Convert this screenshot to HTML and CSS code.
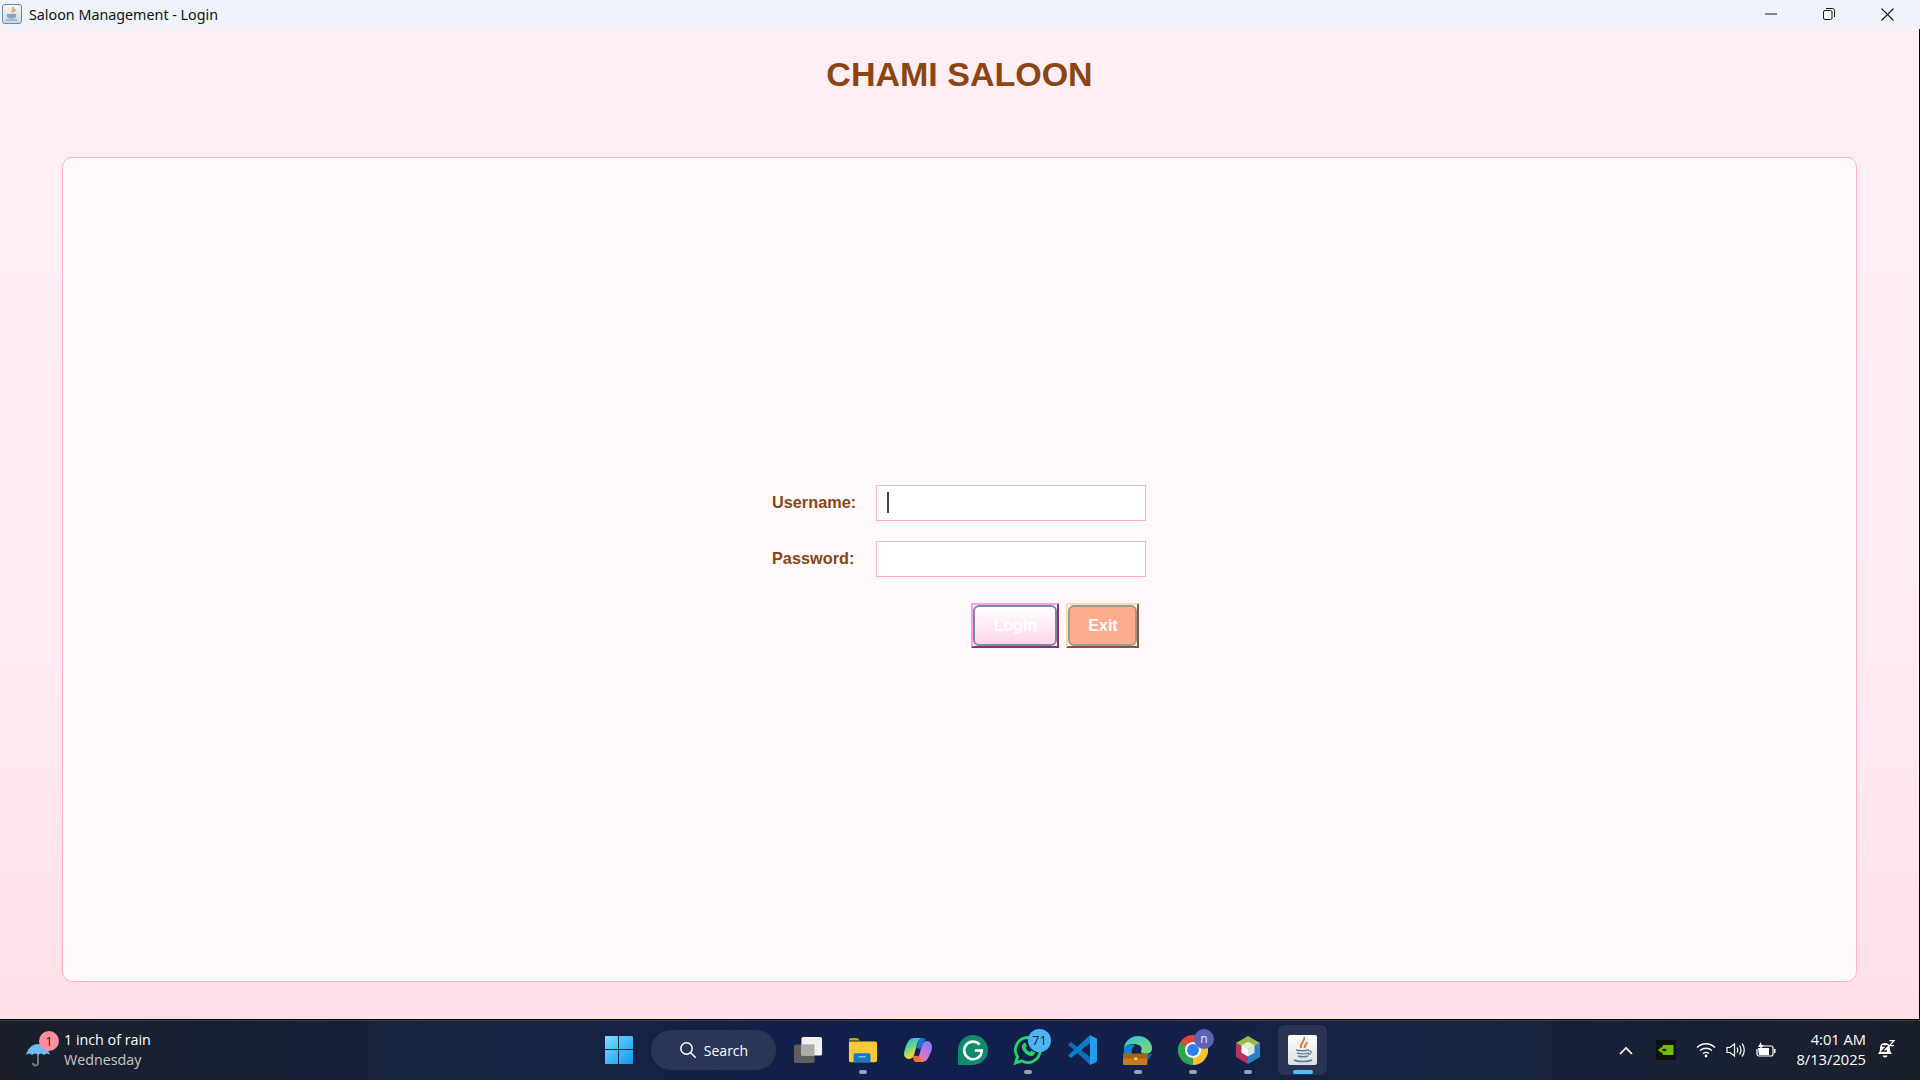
FILE: index.html
```html
<!DOCTYPE html>
<html lang="en">
<head>
<meta charset="utf-8">
<title>Saloon Management - Login</title>
<link rel="stylesheet" href="styles.css">
</head>
<body>
<header class="titlebar">
  <svg class="app-icon" width="20" height="20" viewBox="0 0 20 20">
    <defs><linearGradient id="appbg" x1="0" y1="0" x2="0" y2="1"><stop offset="0" stop-color="#f4f7fa"/><stop offset="1" stop-color="#c9d6e2"/></linearGradient></defs>
    <rect x="0.5" y="0.5" width="19" height="19" rx="2.5" fill="url(#appbg)" stroke="#6c8aa3"/>
    <path d="M11 3c1 2-2 3-1 5M13 5c0 2-2 2-1.500 3.500" fill="none" stroke="#e8883a" stroke-width="1.300"/>
    <path d="M5 10h9v2.500a3 3 0 0 1-3 2H8a3 3 0 0 1-3-2z" fill="#8aa3b8"/>
    <path d="M4 16h11" stroke="#8aa3b8" stroke-width="1.200"/>
  </svg>
  <span class="title-text">Saloon Management - Login</span>
  <div class="win-controls">
    <svg width="12" height="12" viewBox="0 0 12 12"><path d="M0 6h12" stroke="#1a1a1a" stroke-width="1"/></svg>
    <svg width="12" height="12" viewBox="0 0 12 12"><rect x="0.500" y="2.500" width="8.500" height="9" rx="1.500" fill="none" stroke="#1a1a1a"/><path d="M3 .500h6.500a2 2 0 0 1 2 2V9" fill="none" stroke="#1a1a1a"/></svg>
    <svg width="13" height="13" viewBox="0 0 13 13"><path d="M.500.500l12 12M12.500.500l-12 12" stroke="#1a1a1a" stroke-width="1.100"/></svg>
  </div>
</header>

<main class="app">
  <h1 class="brand">CHAMI SALOON</h1>
  <section class="panel">
    <form class="login">
      <label class="field-label">Username:</label>
      <div class="input focused"><i class="caret"></i></div>
      <label class="field-label">Password:</label>
      <div class="input"></div>
      <div class="actions">
        <button type="button" class="btn btn-login"><span class="btn-face">Login</span></button>
        <button type="button" class="btn btn-exit"><span class="btn-face">Exit</span></button>
      </div>
    </form>
  </section>
</main>

<footer class="taskbar">
  <div class="weather">
    <div class="weather-icon">
      <svg width="28" height="30" viewBox="0 0 28 30">
        <path d="M1 17C3 9 9 6 13 6s10 3 12 11c-2-2-4-2-6 0-2-2-4-2-6 0-2-2-4-2-6 0-2-2-4-2-6 0z" fill="#6cbcf7"/>
        <path d="M13 16v9a2.500 2.500 0 0 1-5 0" fill="none" stroke="#7d7d7d" stroke-width="1.800"/>
      </svg>
      <span class="weather-badge">1</span>
    </div>
    <div class="weather-text">
      <div class="weather-main">1 inch of rain</div>
      <div class="weather-sub">Wednesday</div>
    </div>
  </div>

  <div class="dock">
    <svg class="dock-icon" width="30" height="30" viewBox="0 0 30 30">
      <defs><linearGradient id="winblue" x1="0" y1="0" x2="1" y2="1"><stop offset="0" stop-color="#7ddcff"/><stop offset="1" stop-color="#0a9bf0"/></linearGradient></defs>
      <path d="M1 2a1 1 0 0 1 1-1h12v13H1zM15 1h12a2 2 0 0 1 2 1v12H15zM1 15h13v14H2a1 1 0 0 1-1-1zM15 15h14v13a1 1 0 0 1-1 1H15z" fill="url(#winblue)"/>
    </svg>
    <div class="search-pill">
      <svg width="18" height="18" viewBox="0 0 18 18"><circle cx="7.500" cy="7.500" r="5.700" fill="none" stroke="#fff" stroke-width="1.500"/><path d="M11.700 11.700l5 5" stroke="#fff" stroke-width="1.500"/></svg>
      <span>Search</span>
    </div>
    <div class="dock-item task-view">
      <svg width="30" height="28" viewBox="0 0 32 30" preserveAspectRatio="none">
        <rect x="1" y="9" width="22" height="20" rx="2" fill="#5f5f5f"/>
        <rect x="9" y="1" width="22" height="20" rx="2" fill="#f0f0f0"/>
        <rect x="9" y="9" width="14" height="12" fill="#acacac"/>
      </svg>
    </div>
    <div class="dock-item running">
      <svg width="30" height="27" viewBox="0 0 32 30" preserveAspectRatio="none">
        <path d="M1 3a2 2 0 0 1 2-2h7l3 3h-12z" fill="#d49b10"/>
        <path d="M1 5h28a2 2 0 0 1 2 2v19a2 2 0 0 1-2 2H3a2 2 0 0 1-2-2z" fill="#fcc934"/>
        <path d="M6 20a2 2 0 0 1 2-2h14a2 2 0 0 1 2 2v8H6z" fill="#1179c9"/>
        <path d="M11 22h8" stroke="#9fd6ff" stroke-width="1.200"/>
      </svg>
    </div>
    <div class="dock-item">
      <svg width="28" height="26" viewBox="0 0 28 26">
        <defs>
          <linearGradient id="cop1" x1="0.1" y1="0" x2="0.6" y2="1"><stop offset="0" stop-color="#2fa8f5"/><stop offset=".45" stop-color="#62d98a"/><stop offset=".8" stop-color="#f5d33c"/><stop offset="1" stop-color="#f59a3c"/></linearGradient>
          <linearGradient id="cop2" x1="0.8" y1="0" x2="0.3" y2="1"><stop offset="0" stop-color="#7a7cf0"/><stop offset=".5" stop-color="#c873e6"/><stop offset="1" stop-color="#f77a8a"/></linearGradient>
        </defs>
        <path d="M10 1h8c-3 1-4 3-5 6l-3 11c-1 3-3 4-5 4H4c-3-1-4-3-4-5 0-2 1-5 2-8C4 4 6 1 10 1z" fill="url(#cop1)"/>
        <path d="M18 25h-8c3-1 4-3 5-6l3-11c1-3 3-4 5-4 3 0 5 3 5 6s-1 5-2 7c-2 5-4 8-8 8z" fill="url(#cop2)"/>
        <path d="M9 19c4-1 8 0 9 6h-5c-3 0-4-3-4-6z" fill="#f2703f"/>
        <path d="M18 1c-3 1-4 3-5 6l-1 4 5 1 2-5c.5-2 1-3 3-4-1-1.500-2-2-4-2z" fill="#1f6fd6"/>
      </svg>
    </div>
    <div class="dock-item">
      <svg width="30" height="30" viewBox="0 0 30 30">
        <path d="M15 0a15 15 0 0 1 0 30H0V15A15 15 0 0 1 15 0z" fill="#0f8a6c"/>
        <path d="M21.500 9.500A8.800 8.800 0 1 0 23.800 15.500h-7" fill="none" stroke="#fff" stroke-width="2.600"/>
      </svg>
    </div>
    <div class="dock-item running">
      <svg width="32" height="32" viewBox="0 0 32 32">
        <path d="M16 3.500a12.500 12.500 0 0 0-10.500 19.300L3.500 29l6.300-2A12.500 12.500 0 1 0 16 3.500z" fill="none" stroke="#25d366" stroke-width="2.800"/>
        <path d="M11 10c-2 2-1 6 2 9s7 4 9 2l1-2.500-3.500-2-1.800 1.500c-2-1-3.200-2.200-4.200-4.200l1.500-1.800-2-3.500z" fill="#25d366"/>
      </svg>
      <span class="count-badge">71</span>
    </div>
    <div class="dock-item">
      <svg width="30" height="32" viewBox="0 0 30 32">
        <path d="M3 8L0 10.500 17 26l5 5V23z" fill="#0e6fb5"/>
        <path d="M22 1L0 21.500 3 24 22 9z" fill="#0a7fc8"/>
        <path d="M22 1l7 3.500v23L22 31z" fill="#1e9fe8"/>
      </svg>
    </div>
    <div class="dock-item running">
      <svg width="30" height="30" viewBox="0 0 32 32">
        <defs><linearGradient id="edgeg" x1="0" y1="0" x2="1" y2="1"><stop offset="0" stop-color="#2fc4d8"/><stop offset="1" stop-color="#7edb6a"/></linearGradient></defs>
        <path d="M1 14C2 6 9 1 16 1c9 0 15 7 15 13 0 4-3 6-7 6-3 0-5-1-5-3 2-2 1-6-4-7-6-1-11 0-14 4z" fill="url(#edgeg)"/>
        <path d="M1 14c3-4 8-5 12-3-3 2-5 6-3 11H1z" fill="#1283d8"/>
        <path d="M19 20h12c-2 6-7 10-13 11z" fill="#0c5ba8"/>
        <rect x="0" y="20" width="26" height="12" rx="1" fill="#c47a1e"/>
        <rect x="0" y="20" width="26" height="5" fill="#a9640f"/>
        <rect x="12" y="24" width="3" height="2.500" fill="#ffe08a"/>
      </svg>
    </div>
    <div class="dock-item running">
      <svg width="30" height="30" viewBox="0 0 30 30">
        <circle cx="15" cy="15" r="15" fill="#e2453a"/>
        <path d="M15 15L28 7.500A15 15 0 0 1 15 30z" fill="#f8c32c"/>
        <path d="M15 15L15 30A15 15 0 0 1 2 7.500z" fill="#2ea44f"/>
        <circle cx="15" cy="15" r="8" fill="#fff"/>
        <circle cx="15" cy="15" r="6" fill="#2f7df0"/>
      </svg>
      <span class="profile-badge">n</span>
    </div>
    <div class="dock-item running">
      <svg width="26" height="30" viewBox="0 0 28 32">
        <path d="M14 1l13 7.500-13 7.500L1 8.500z" fill="#9ab94f"/>
        <path d="M1 8.500L14 16v15L1 23.500z" fill="#b8345a"/>
        <path d="M27 8.500L14 16v15l13-7.500z" fill="#2f7fc4"/>
        <path d="M14 7l7 4-7 4-7-4z" fill="#e6ecc8"/>
        <path d="M7 11l7 4v8l-7-4z" fill="#ffffff"/>
        <path d="M21 11l-7 4v8l7-4z" fill="#dfe3ea"/>
      </svg>
    </div>
    <div class="dock-item active">
      <div class="java-tile">
        <svg width="22" height="28" viewBox="0 0 22 28">
          <path d="M12 1c2 4-5 6-3 11M15 6c0 3-3 3-2.500 6" fill="none" stroke="#d9722b" stroke-width="1.800"/>
          <path d="M4 14c3 1 10 1 13 0M5 17c3 1 9 1 12 0M6 20c3 1 7 1 10 0" fill="none" stroke="#5f7f99" stroke-width="1.500"/>
          <path d="M17 15c3-1 3 3-1 4" fill="none" stroke="#5f7f99" stroke-width="1.200"/>
          <path d="M2 24c4 2 14 2 18 0" fill="none" stroke="#5f7f99" stroke-width="1.500"/>
        </svg>
      </div>
      <i class="active-bar"></i>
    </div>
  </div>

  <div class="tray">
    <svg class="chevron" width="14" height="9" viewBox="0 0 14 9"><path d="M1 8l6-6 6 6" fill="none" stroke="#fff" stroke-width="1.700"/></svg>
    <div class="nvidia">
      <svg width="16" height="10" viewBox="0 0 18 12"><rect x="5" y="0" width="13" height="12" fill="#76b900"/><path d="M0 6c3-4 8-4 11 0-3 4-8 4-11 0z" fill="#76b900" stroke="#76b900" stroke-width="1"/><path d="M4 6c2-2 4-2 6 0-2 2-4 2-6 0z" fill="#17191c"/></svg>
    </div>
    <svg class="wifi" width="20" height="16" viewBox="0 0 20 16"><path d="M1 5.500c5-5 13-5 18 0M4 8.500c3.500-3 8.500-3 12 0M7 11.500c2-1.500 4-1.500 6 0" fill="none" stroke="#fff" stroke-width="1.300"/><circle cx="10" cy="14" r="1.400" fill="#fff"/></svg>
    <svg class="volume" width="20" height="16" viewBox="0 0 20 16"><path d="M1 5.500h3L8.500 2v12L4 10.500H1z" fill="none" stroke="#fff" stroke-width="1.200"/><path d="M11 5.500c1 1.500 1 3.500 0 5M13.500 3.500c2 2.500 2 6.500 0 9M16 1.500c3 3.500 3 9.500 0 13" fill="none" stroke="#fff" stroke-width="1.200"/></svg>
    <svg class="battery" width="20" height="16" viewBox="0 0 20 16"><path d="M5 4H15a2 2 0 0 1 2 2v6a2 2 0 0 1-2 2H3a2 2 0 0 1-2-2V7" fill="none" stroke="#fff" stroke-width="1.200"/><path d="M2 6h11v7H3z" fill="#fff"/><path d="M18 7h1.500v4H18z" fill="#fff"/><path d="M5 0L2 5h2.500L3 9l5-6H5.500z" fill="#fff"/></svg>
    <div class="clock">
      <div>4:01 AM</div>
      <div>8/13/2025</div>
    </div>
    <div class="bell">
      <svg width="18" height="20" viewBox="0 0 18 20"><path d="M8 3C4 3 3 6 3 9c0 2-1 4-2 5h14c-1-1-2-3-2-5 0-3-1-6-5-6zM5.500 15.500a2.500 2 0 0 0 5 0z" fill="#fff"/><path d="M5 6h5L5 11h5" fill="none" stroke="#17191c" stroke-width="1.300"/><path d="M12.500 .700h4.500l-4.500 5h4.500" fill="none" stroke="#fff" stroke-width="1.300"/></svg>
    </div>
  </div>
</footer>
</body>
</html>
```

FILE: styles.css
```css
* { box-sizing: border-box; }

html, body { height: 100%; }

body {
  margin: 0;
  display: flex;
  flex-direction: column;
  height: 1080px;
  overflow: hidden;
  font-family: "Open Sans", "Noto Sans", sans-serif;
  background: #000;
}

/* Title bar */
.titlebar {
  height: 29px;
  flex: none;
  display: flex;
  align-items: center;
  padding-left: 2px;
  background: #eff4fa;
  color: #111;
}
.app-icon { flex: none; margin-top: -2px; }
.title-text {
  margin-left: 7px;
  margin-bottom: 1px;
  font-family: "Noto Sans", sans-serif;
  font-size: 14.3px;
  white-space: nowrap;
}
.win-controls {
  margin-left: auto;
  margin-bottom: 1px;
  display: flex;
  align-items: center;
  gap: 46px;
  padding-right: 26px;
}

/* App */
.app {
  flex: none;
  height: 990px;
  margin-right: 1px;
  padding: 25px 62px 37px;
  display: flex;
  flex-direction: column;
  background: linear-gradient(180deg, #ffeff5 0%, #ffecf2 60%, #ffe0e9 100%);
}
.brand {
  margin: 0 0 49px;
  height: 54px;
  line-height: 40px;
  text-align: center;
  font-family: "Liberation Sans", Arial, sans-serif;
  font-weight: 700;
  font-size: 34px;
  color: #8b4513;
}
.panel {
  flex: 1;
  display: flex;
  align-items: center;
  justify-content: center;
  padding-bottom: 6px;
  background: #fff9fb;
  border: 1px solid #ffb3c1;
  border-radius: 10px;
}
.login {
  display: grid;
  grid-template-columns: 103px 270px;
  row-gap: 20px;
  align-items: start;
}
.field-label {
  margin-left: -1px;
  font-family: "Liberation Sans", Arial, sans-serif;
  font-weight: 700;
  font-size: 16.3px;
  line-height: 35px;
  color: #8b4513;
}
.input {
  height: 36px;
  background: #fff;
  border: 1px solid #ffb3c1;
  padding: 6px 10px;
}
.caret {
  display: block;
  width: 2px;
  height: 21px;
  background: #444;
}
.actions {
  grid-column: 2;
  display: flex;
  gap: 7px;
  margin-top: 6px;
  margin-left: 95px;
}
.btn {
  height: 45px;
  padding: 0;
  font-family: "Liberation Sans", Arial, sans-serif;
  font-weight: 700;
  font-size: 16px;
  color: #fff;
  border-style: solid;
  border-width: 2px;
  border-radius: 0;
  background: #fff9fb;
}
.btn-face {
  display: flex;
  align-items: center;
  justify-content: center;
  height: 100%;
  padding-left: 1px;
  border: 2px solid;
  border-radius: 6px;
}
.btn-login {
  width: 88px;
  border-color: #ff9bf5 #8e2f6e #8e2f6e #ff9bf5;
}
.btn-login .btn-face {
  border-color: #7b8a9c;
  background: linear-gradient(180deg, #ffffff 0%, #ffd6ec 100%);
}
.btn-exit {
  width: 73px;
  border-color: #ffdf9f #8f5232 #8f5232 #ffdf9f;
}
.btn-exit .btn-face {
  border-color: #9a9a9a;
  background: #ffac8d;
}

/* Taskbar */
.taskbar {
  flex: none;
  height: 60px;
  margin-top: 1px;
  position: relative;
  display: flex;
  align-items: center;
  box-shadow: inset 0 1px 0 #3a3d44;
  background: linear-gradient(90deg, #1a1f2b 0%, #16233f 25%, #111f4f 50%, #16233f 75%, #1a1f2b 100%);
  color: #fff;
}
.weather {
  display: flex;
  align-items: center;
  gap: 9px;
  margin-left: 25px;
}
.weather-icon {
  position: relative;
  width: 30px;
  height: 36px;
  display: flex;
  align-items: flex-end;
}
.weather-badge {
  position: absolute;
  left: 14px;
  top: -1px;
  width: 20px;
  height: 20px;
  border-radius: 50%;
  background: #ff8f9c;
  color: #1a1a1a;
  font-size: 13px;
  line-height: 20px;
  text-align: center;
}
.weather-text { font-size: 14.3px; line-height: 20px; }
.weather-main { color: #fff; }
.weather-sub { color: #c8c8c8; }

.dock {
  position: absolute;
  left: 604px;
  top: 0;
  bottom: 0;
  display: flex;
  align-items: center;
}
.dock-icon { margin-right: 17px; }
.search-pill {
  width: 125px;
  height: 40px;
  margin-right: 7px;
  display: flex;
  align-items: center;
  justify-content: center;
  gap: 7px;
  border-radius: 20px;
  background: #2a3558;
  font-size: 14px;
}
.dock-item {
  position: relative;
  flex: none;
  width: 49px;
  height: 50px;
  margin-right: 6px;
  display: flex;
  align-items: center;
  justify-content: center;
  border-radius: 6px;
}
.running::after {
  content: "";
  position: absolute;
  left: 20.500px;
  bottom: 1px;
  width: 8px;
  height: 4px;
  border-radius: 2px;
  background: #9aa3b5;
}
.count-badge {
  position: absolute;
  left: 25px;
  top: 4px;
  width: 23px;
  height: 23px;
  border-radius: 50%;
  background: #4db5f5;
  color: #10203a;
  font-size: 13px;
  line-height: 23px;
  text-align: center;
}
.profile-badge {
  position: absolute;
  left: 26px;
  top: 4px;
  width: 20px;
  height: 20px;
  border-radius: 50%;
  background: #5a63b5;
  color: #e4e6f5;
  font-size: 12px;
  line-height: 19px;
  text-align: center;
}
.active { background: #2a3352; }
.java-tile {
  width: 29px;
  height: 30px;
  display: flex;
  align-items: center;
  justify-content: center;
  border-radius: 2px;
  background: linear-gradient(180deg, #ffffff 0%, #dedede 100%);
}
.active-bar {
  position: absolute;
  left: 15px;
  bottom: 1px;
  width: 20px;
  height: 4px;
  border-radius: 2px;
  background: #4cc2ff;
}

.tray {
  position: absolute;
  right: 0;
  top: 0;
  bottom: 0;
  display: flex;
  align-items: center;
}
.chevron { margin-right: 23px; }
.nvidia {
  width: 20px;
  height: 20px;
  margin-right: 20px;
  display: flex;
  align-items: center;
  justify-content: center;
  background: #101010;
}
.wifi { margin-right: 10px; }
.volume { margin-right: 10px; }
.battery { margin-right: 20px; }
.clock {
  text-align: right;
  font-size: 14.7px;
  line-height: 20px;
  margin-right: 11px;
  margin-bottom: 2px;
}
.bell { margin-right: 25px; display: flex; }
```
